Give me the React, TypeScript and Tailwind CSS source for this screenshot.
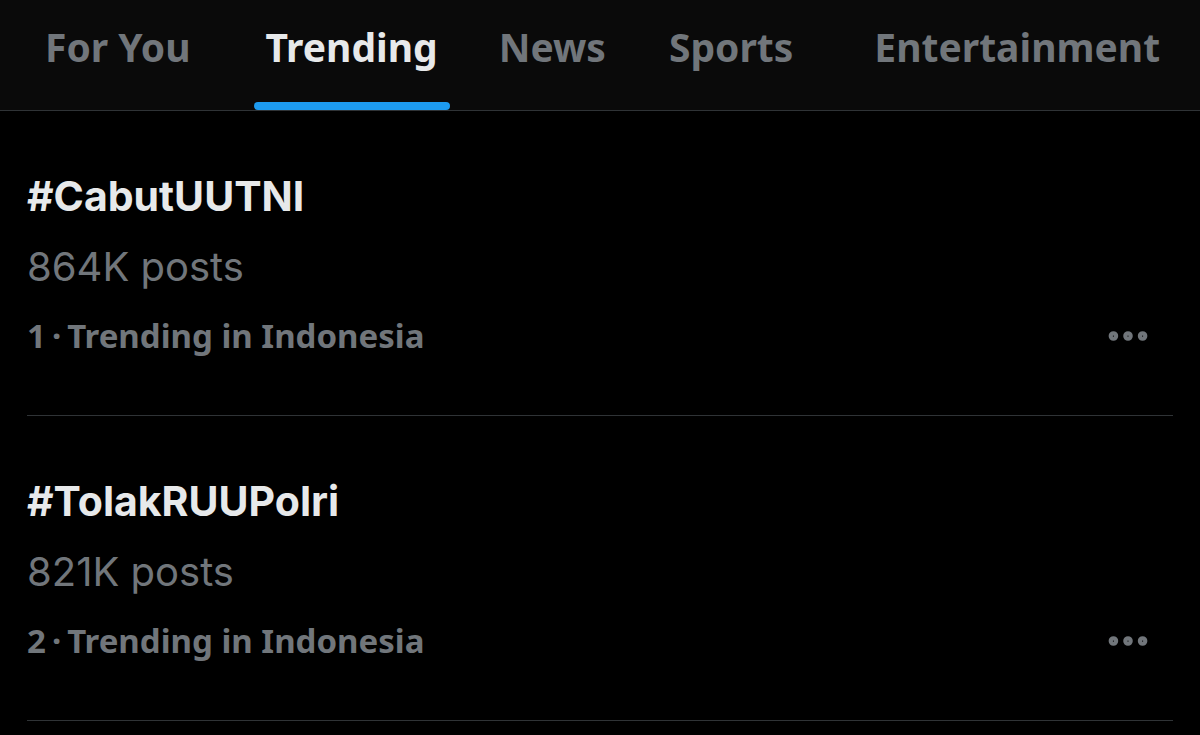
import { MoreHorizontal } from "lucide-react"

type Trend = {
  rank: number
  tag: string
  posts: string
  place: string
}

const tabs = [
  { label: "For You", ml: "ml-[45px]" },
  { label: "Trending", ml: "ml-[75px]", active: true },
  { label: "News", ml: "ml-[61px]" },
  { label: "Sports", ml: "ml-[63px]" },
  { label: "Entertainment", ml: "ml-[81px]" },
]

const trends: Trend[] = [
  { rank: 1, tag: "#CabutUUTNI", posts: "864K posts", place: "Indonesia" },
  { rank: 2, tag: "#TolakRUUPolri", posts: "821K posts", place: "Indonesia" },
]

function TabBar() {
  return (
    <nav className="h-[111px] bg-[#0a0a0a] border-b border-[#2f3336] flex items-stretch">
      {tabs.map((t) => (
        <div key={t.label} className={`${t.ml} relative flex items-start pt-[22px]`}>
          <span
            className={`text-[39px] leading-[50px] font-bold ${
              t.active ? "text-[#e7e9ea]" : "text-[#71767b]"
            }`}
            style={{ fontFamily: '"Noto Sans", "Open Sans", sans-serif' }}
          >
            {t.label}
          </span>
          {t.active && (
            <div className="absolute left-[-12px] right-[-12px] bottom-0 h-[8px] rounded-full bg-[#1d9bf0]" />
          )}
        </div>
      ))}
    </nav>
  )
}

function TrendRow({ trend }: { trend: Trend }) {
  return (
    <div className="mx-[27px] pt-[60px] pb-[54px] border-b border-[#2f3336] relative">
      <div
        className="h-[50px] text-[41px] leading-[50px] font-bold text-[#e7e9ea]"
        style={{ fontFamily: "Inter, Roboto, sans-serif" }}
      >
        {trend.tag}
      </div>
      <div
        className="mt-[21px] h-[50px] text-[40px] leading-[50px] text-[#71767b]"
        style={{ fontFamily: "Inter, Roboto, sans-serif" }}
      >
        {trend.posts}
      </div>
      <div className="mt-[19px] h-[50px] flex items-center justify-between">
        <span
          className="text-[33px] leading-[50px] font-bold text-[#71767b]"
          style={{ fontFamily: '"Noto Sans", "Open Sans", sans-serif' }}
        >
          {trend.rank}
          <span className="mx-[6px]">·</span>
          Trending in {trend.place}
        </span>
        <MoreHorizontal className="mr-[20px] w-[50px] h-[50px] text-[#71767b]" strokeWidth={2.6} />
      </div>
    </div>
  )
}

export default function App() {
  return (
    <div className="w-[1200px] h-[735px] overflow-hidden bg-black">
      <TabBar />
      {trends.map((t) => (
        <TrendRow key={t.rank} trend={t} />
      ))}
    </div>
  )
}
